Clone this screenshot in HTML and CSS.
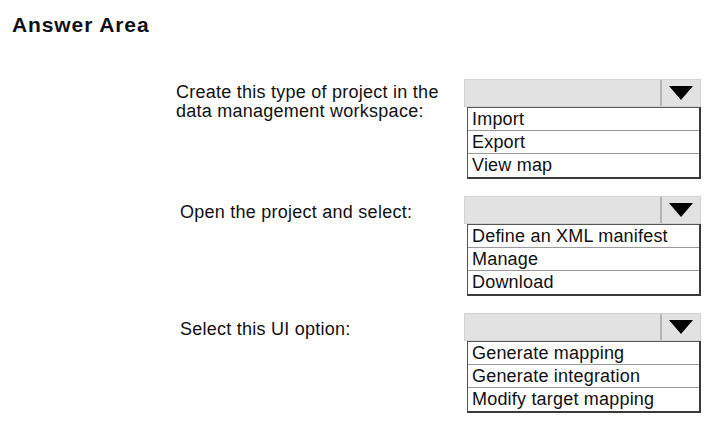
FILE: index.html
```html
<!DOCTYPE html>
<html lang="en">
<head>
    <meta charset="UTF-8">
    <meta name="viewport" content="width=device-width, initial-scale=1.0">
    <title>Answer Area</title>
    <link rel="stylesheet" href="styles.css">
</head>
<body>
    <h1 class="title">Answer Area</h1>

    <div class="questions">
        <div class="question">
            <p class="label">Create this type of project in the data management workspace:</p>
            <div class="dropdown">
                <div class="dropdown-head">
                    <span class="dropdown-value"></span>
                    <span class="dropdown-btn"><span class="arrow"></span></span>
                </div>
                <ul class="options">
                    <li>Import</li>
                    <li>Export</li>
                    <li>View map</li>
                </ul>
            </div>
        </div>

        <div class="question">
            <p class="label inset">Open the project and select:</p>
            <div class="dropdown">
                <div class="dropdown-head">
                    <span class="dropdown-value"></span>
                    <span class="dropdown-btn"><span class="arrow"></span></span>
                </div>
                <ul class="options">
                    <li>Define an XML manifest</li>
                    <li>Manage</li>
                    <li>Download</li>
                </ul>
            </div>
        </div>

        <div class="question">
            <p class="label inset">Select this UI option:</p>
            <div class="dropdown">
                <div class="dropdown-head">
                    <span class="dropdown-value"></span>
                    <span class="dropdown-btn"><span class="arrow"></span></span>
                </div>
                <ul class="options">
                    <li>Generate mapping</li>
                    <li>Generate integration</li>
                    <li>Modify target mapping</li>
                </ul>
            </div>
        </div>
    </div>
</body>
</html>
```

FILE: styles.css
```css
/* Reset and global styles */
* {
    margin: 0;
    padding: 0;
    box-sizing: border-box;
}

body {
    font-family: "Liberation Sans", Arial, sans-serif;
    background-color: #ffffff;
    color: #111;
    width: 714px;
    height: 429px;
    overflow: hidden;
}

/* Title */
.title {
    font-size: 21px;
    line-height: 24px;
    font-weight: bold;
    letter-spacing: 0.9px;
    padding: 13px 0 0 12px;
}

/* Question rows */
.questions {
    display: flex;
    flex-direction: column;
    gap: 17px;
    margin-top: 42px;
    padding-left: 176px;
}

.question {
    display: flex;
    align-items: flex-start;
}

.label {
    width: 288px;
    font-size: 18px;
    line-height: 19px;
    letter-spacing: 0.25px;
    padding-top: 4px;
    padding-right: 10px;
}

.label.inset {
    padding-top: 7px;
    padding-left: 4px;
}

/* Dropdown */
.dropdown {
    width: 237px;
}

.dropdown-head {
    display: flex;
    height: 28px;
    background-color: #e2e2e2;
    border: 1px solid #d2d2d2;
}

.dropdown-value {
    flex: 1;
}

.dropdown-btn {
    width: 40px;
    display: flex;
    justify-content: center;
    align-items: center;
    border-left: 2px solid #b4b4b4;
}

.arrow {
    width: 0;
    height: 0;
    border-left: 12px solid transparent;
    border-right: 12px solid transparent;
    border-top: 14px solid #000;
}

.options {
    list-style: none;
    margin-left: 3px;
    border-top: 1px solid #555;
    border-left: 1px solid #555;
    border-right: 2px solid #3a3a3a;
    border-bottom: 2px solid #3a3a3a;
}

.options li {
    height: 23px;
    font-size: 18px;
    line-height: 23px;
    letter-spacing: 0.2px;
    padding-left: 4px;
    border-bottom: 1px solid #9a9a9a;
}

.options li:last-child {
    border-bottom: none;
}
```
